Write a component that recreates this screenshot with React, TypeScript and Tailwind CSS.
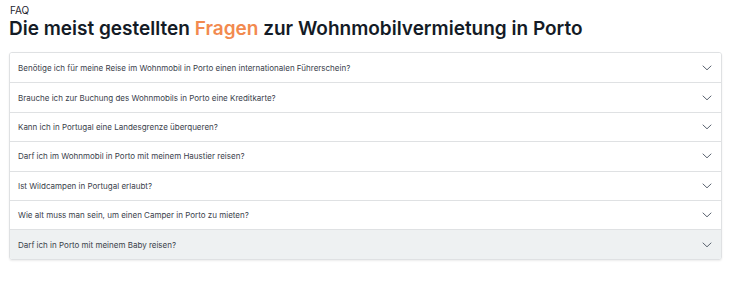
import React from "react";

const questions = [
  "Benötige ich für meine Reise im Wohnmobil in Porto einen internationalen Führerschein?",
  "Brauche ich zur Buchung des Wohnmobils in Porto eine Kreditkarte?",
  "Kann ich in Portugal eine Landesgrenze überqueren?",
  "Darf ich im Wohnmobil in Porto mit meinem Haustier reisen?",
  "Ist Wildcampen in Portugal erlaubt?",
  "Wie alt muss man sein, um einen Camper in Porto zu mieten?",
  "Darf ich in Porto mit meinem Baby reisen?",
];

function Chevron() {
  return (
    <svg width="10" height="6" viewBox="0 0 10 6" fill="none" className="shrink-0">
      <path d="M1 1 L5 4.8 L9 1" stroke="#5b6470" strokeWidth="1" strokeLinecap="round" strokeLinejoin="round" />
    </svg>
  );
}

export default function App() {
  return (
    <div className="w-[750px] h-[282px] bg-white pl-[9px] pr-[28px] pt-[4px]" style={{ fontFamily: "Inter, 'Liberation Sans', sans-serif" }}>
      <div className="text-[10px] leading-[13px] text-[#1d2430] pl-[1px]">FAQ</div>
      <h1 className="text-[19px] leading-[24px] font-semibold text-[#141b26] tracking-normal" style={{ fontFamily: "Inter, sans-serif" }}>
        Die meist gestellten <span className="text-[#f28a4f]">Fragen</span> zur Wohnmobilvermietung in Porto
      </h1>
      <div className="mt-[11px] border border-[#dfe1e3] rounded-[3px] shadow-[0_1px_2px_rgba(0,0,0,0.08)] overflow-hidden">
        {questions.map((q, i) => (
          <div
            key={i}
            className={`flex items-center justify-between h-[29.4px] pl-[8px] pr-[9px] ${i > 0 ? "border-t border-[#dfe1e3]" : ""} ${i === questions.length - 1 ? "bg-[#eef1f2]" : "bg-white"}`}
          >
            <span className="text-[8px] text-[#3a414b]">{q}</span>
            <Chevron />
          </div>
        ))}
      </div>
    </div>
  );
}
